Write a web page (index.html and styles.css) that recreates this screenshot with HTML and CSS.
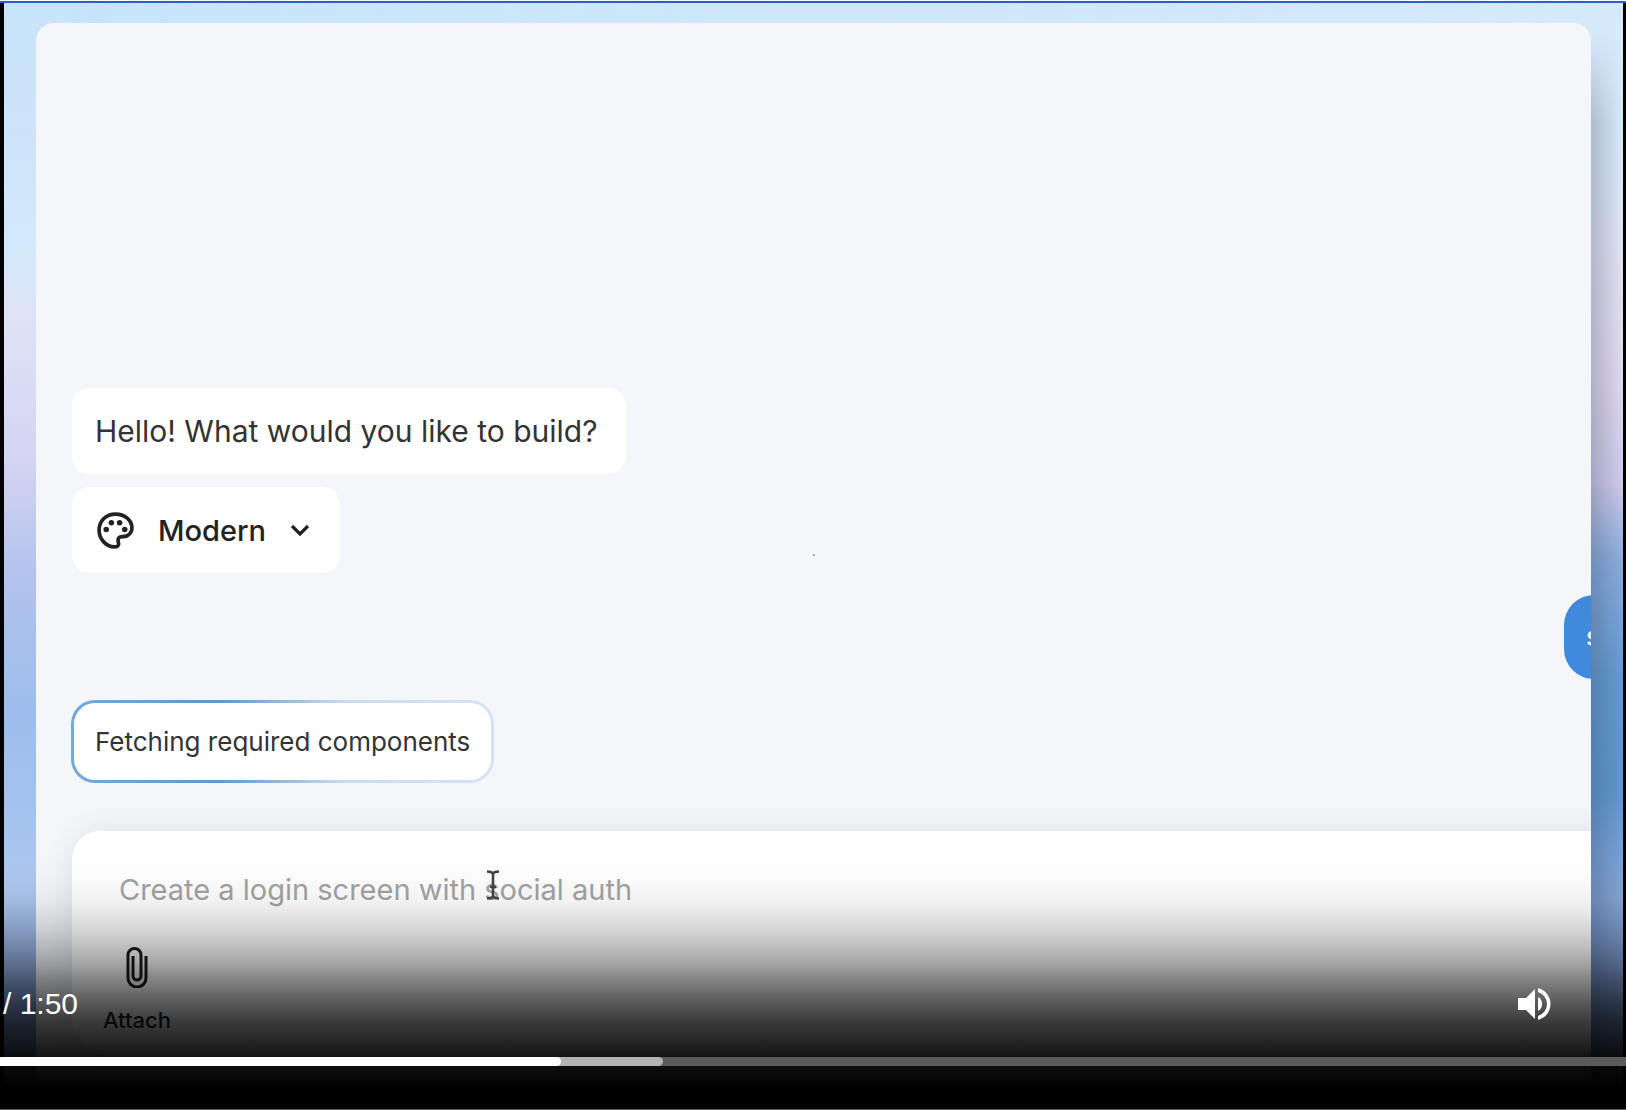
FILE: index.html
```
<!DOCTYPE html>
<html lang="en">
<head>
    <meta charset="UTF-8">
    <meta name="viewport" content="width=device-width, initial-scale=1.0">
    <title>Video Player</title>
    <link rel="stylesheet" href="styles.css">
</head>
<body>
    <div class="player">
        <div class="video">
            <main class="app">
                <section class="chat">
                    <div class="message greeting">Hello! What would you like to build?</div>
                    <button class="message theme">
                        <svg class="palette" viewBox="0 0 36 36" fill="none" stroke="#222" stroke-width="3.6" stroke-linejoin="round">
                            <path d="M18 2C8.500 2 2 9 2 17.500C2 27 9.500 34 17 34C20 34 21.500 32.500 21 30.500C20.300 28 19.800 26.500 21.300 25C23 23.300 26.500 24.800 29.500 23C32.800 21 34 18.500 34 15.500C34 8 27 2 18 2Z"/>
                            <g fill="#222" stroke="none">
                                <circle cx="9" cy="17" r="2.700"/>
                                <circle cx="14" cy="10.500" r="2.700"/>
                                <circle cx="22" cy="10.500" r="2.700"/>
                                <circle cx="27" cy="17" r="2.700"/>
                            </g>
                        </svg>
                        <span>Modern</span>
                        <svg class="chevron" viewBox="0 0 20 12" fill="none" stroke="#222" stroke-width="3.2">
                            <path d="M2 2l8 8 8-8"/>
                        </svg>
                    </button>
                    <div class="user-message">s</div>
                    <div class="status"><div class="status-text">Fetching required components</div></div>
                </section>
                <form class="composer">
                    <input class="prompt" type="text" placeholder="Create a login screen with social auth" aria-label="Prompt">
                    <button type="button" class="attach">
                        <svg class="clip" viewBox="0 0 22 42" fill="none" stroke="#1a1a1a" stroke-width="3">
                            <path d="M20 10v22a9 9 0 0 1-18 0V9a6.500 6.500 0 0 1 13 0v21a4 4 0 0 1-8 0V10"/>
                        </svg>
                        <span>Attach</span>
                    </button>
                </form>
            </main>
        </div>
        <span class="speck"></span>
        <svg class="cursor" viewBox="0 0 14 30" fill="none" stroke="#444" stroke-width="2.6">
            <path d="M1 1.500Q6 1.500 7 4Q8 1.500 13 1.500M7 4V26M4 17h6M1 28.500Q6 28.500 7 26Q8 28.500 13 28.500"/>
        </svg>
        <div class="controls">
            <div class="controls-row">
                <span class="time">/ 1:50</span>
                <button class="mute" aria-label="Mute">
                    <svg viewBox="0 0 34 32" fill="#fff">
                        <path d="M0 10h8l9-9v30l-9-9H0z"/>
                        <path d="M20 9a8 8 0 0 1 0 14z"/>
                        <path d="M20 0a16.500 16.500 0 0 1 0 32v-4a12.500 12.500 0 0 0 0-24z"/>
                    </svg>
                </button>
            </div>
            <div class="timeline">
                <div class="buffered" style="width: 40.8%"></div>
                <div class="played" style="width: 34.5%"></div>
            </div>
        </div>
    </div>
</body>
</html>
```
FILE: styles.css
```
* { box-sizing: border-box; }
body {
    margin: 0;
    padding-top: 1px;
    background: #fff;
    font-family: Inter, sans-serif;
    color: #333;
}
button { border: none; background: none; padding: 0; font: inherit; color: inherit; cursor: pointer; }
svg { display: block; }

.player {
    position: relative;
    height: calc(100vh - 1px);
    overflow: hidden;
    background: #000;
    border-top: 2px solid #2860c4;
    border-bottom: 1px solid #2860c4;
}
.video {
    position: relative;
    height: calc(100% - 2px);
    margin: 0 3px 0 4px;
    padding: 20px 32px 18px;
    background: linear-gradient(to bottom, #c8e4fb 0, #cde3f9 130px, #d4e9fb 250px, #dfe3f6 312px, #d5d4f3 455px, #b3c3ed 570px, #9dbdec 714px, #a6c4f0 828px, #b0c8ef 886px, #809fd5 1000px);
}
/* wallpaper colours of the right side, faded in from the left */
.video::before {
    content: "";
    position: absolute;
    inset: 0;
    background: linear-gradient(to bottom, #d4e9fb 0, #d8ebfa 130px, #e2e3f5 256px, #e2daf0 365px, #d0cbec 480px, #8baddf 556px, #659bd3 670px, #5e98d0 786px, #87a8dc 894px, #7f9fd9 1000px);
    -webkit-mask-image: linear-gradient(to right, transparent 3%, #000);
    mask-image: linear-gradient(to right, transparent 3%, #000);
}
/* shade on the right side of the window */
.video::after {
    content: "";
    position: absolute;
    top: 30px;
    right: 0;
    bottom: 0;
    width: 32px;
    background: linear-gradient(to right, rgba(40, 50, 70, 0.25), rgba(40, 50, 70, 0));
    -webkit-mask-image: linear-gradient(to bottom, transparent, #000 90px);
    mask-image: linear-gradient(to bottom, transparent, #000 90px);
}
.app {
    position: relative;
    z-index: 1;
    display: flex;
    flex-direction: column;
    justify-content: flex-end;
    height: 100%;
    padding: 0 0 39px 36px;
    overflow: hidden;
    background: #f4f6fa;
    border-radius: 18px;
}

.chat { display: flex; flex-direction: column; align-items: flex-start; }
.message {
    display: flex;
    align-items: center;
    height: 86px;
    padding: 0 28px 0 23px;
    background: #fff;
    border-radius: 18px;
    font-size: 30px;
}
.greeting { margin-bottom: 13px; }
.theme { gap: 24px; padding: 0 30px 0 25px; font-size: 29px; font-weight: 500; color: #222; }
.palette { width: 37px; height: 37px; }
.chevron { width: 20px; height: 12px; }
.user-message {
    align-self: flex-end;
    width: 120px;
    height: 84px;
    margin: 22px -93px 21px 0;
    padding-left: 22px;
    background: #4189dc;
    border-radius: 30px;
    color: #fff;
    font-size: 26px;
    font-weight: 500;
    line-height: 84px;
}
.status {
    margin-left: -1px;
    margin-bottom: 48px;
    padding: 3px;
    border-radius: 24px;
    background: linear-gradient(to right, #75a9dc, #5f98cf 35%, #c9dcf2 65%, #d6e3f4);
}
.status-text {
    padding: 0 21px;
    background: #fff;
    border-radius: 21px;
    font-size: 26px;
    line-height: 77px;
}

.composer {
    display: flex;
    flex-direction: column;
    height: 219px;
    margin-right: -60px;
    padding: 36px 31px 0;
    background: #fff;
    border-radius: 28px;
    box-shadow: 0 0 32px rgba(0, 0, 0, 0.09);
}
.prompt {
    width: 100%;
    height: 44px;
    padding: 0 16px;
    border: none;
    outline: none;
    background: none;
    font: 29px Inter, sans-serif;
}
.prompt::placeholder { color: #a2a4a4; opacity: 1; }
.attach {
    display: flex;
    flex-direction: column;
    align-items: center;
    align-self: flex-start;
    gap: 18px;
    margin-top: 35px;
    color: #222;
    font-size: 22px;
    font-weight: 500;
    line-height: 28px;
}
.clip { width: 22px; height: 42px; }

.speck { position: absolute; left: 50%; top: calc(50% - 2px); width: 2px; height: 2px; background: #aaa; }
.cursor { position: absolute; left: 486px; top: 867px; width: 14px; height: 30px; }

.speck, .cursor, .controls { z-index: 2; }
.controls {
    position: absolute;
    left: 0;
    right: 0;
    bottom: 0;
    display: flex;
    flex-direction: column;
    justify-content: flex-end;
    height: 260px;
    padding-bottom: 43px;
    background: linear-gradient(to bottom, rgba(0, 0, 0, 0) 0, rgba(0, 0, 0, 0.01) 25px, rgba(0, 0, 0, 0.05) 51px, rgba(0, 0, 0, 0.12) 71px, rgba(0, 0, 0, 0.18) 84px, rgba(0, 0, 0, 0.27) 101px, rgba(0, 0, 0, 0.37) 116px, rgba(0, 0, 0, 0.49) 131px, rgba(0, 0, 0, 0.63) 151px, rgba(0, 0, 0, 0.76) 171px, rgba(0, 0, 0, 0.87) 196px, rgba(0, 0, 0, 0.92) 208px, #000 241px);
}
.controls-row {
    display: flex;
    align-items: center;
    justify-content: space-between;
    height: 40px;
    margin-bottom: 33px;
    padding: 0 74px 0 3px;
}
.time { color: #fff; font-family: "Liberation Sans", Arial, sans-serif; font-size: 30px; }
.mute svg { width: 34px; height: 32px; }
.timeline { position: relative; height: 9px; background: #5b5b5b; }
.buffered, .played { position: absolute; left: 0; top: 0; height: 9px; border-radius: 0 5px 5px 0; }
.buffered { background: #b3b3b3; }
.played { background: #fff; }
```
